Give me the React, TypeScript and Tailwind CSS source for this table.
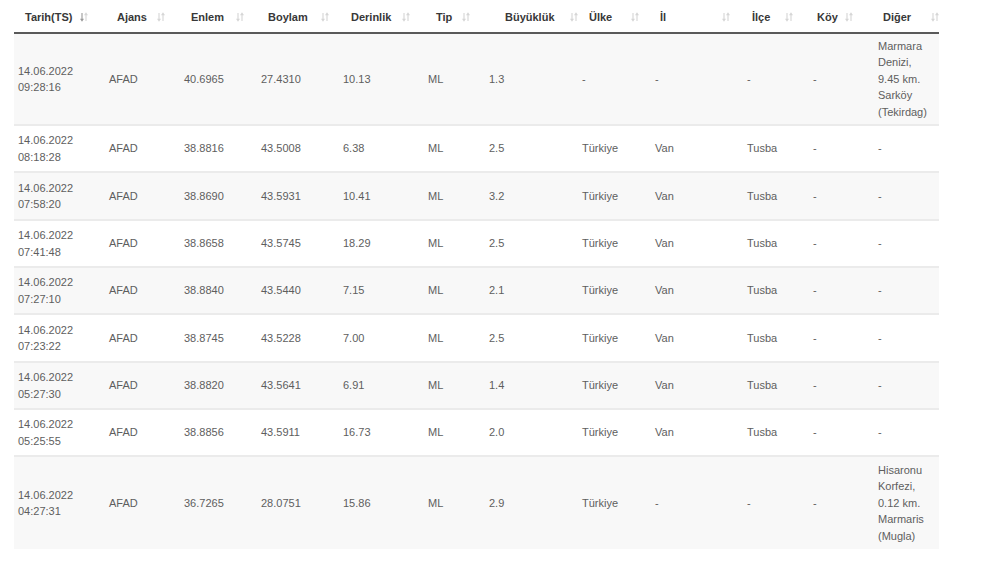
import React from "react";

type Col = { label: string; w: number; hpl: number; gap: number };

const cols: Col[] = [
  { label: "Tarih(TS)", w: 91, hpl: 11, gap: 8 },
  { label: "Ajans", w: 75, hpl: 12, gap: 10 },
  { label: "Enlem", w: 77, hpl: 11, gap: 12 },
  { label: "Boylam", w: 82, hpl: 11, gap: 13 },
  { label: "Derinlik", w: 85, hpl: 12, gap: 11 },
  { label: "Tip", w: 61, hpl: 12, gap: 10 },
  { label: "Büyüklük", w: 93, hpl: 20, gap: 15 },
  { label: "Ülke", w: 73, hpl: 11, gap: 19 },
  { label: "İl", w: 92, hpl: 9, gap: 56 },
  { label: "İlçe", w: 66, hpl: 9, gap: 15 },
  { label: "Köy", w: 65, hpl: 8, gap: 7 },
  { label: "Diğer", w: 65, hpl: 9, gap: 20 },
];

type Row = { d: string; t: string; enlem: string; boylam: string; der: string; mag: string; ulke: string; il: string; ilce: string; koy: string; diger: string[]; h: string };

const rows: Row[] = [
  { d: "14.06.2022", t: "09:28:16", enlem: "40.6965", boylam: "27.4310", der: "10.13", mag: "1.3", ulke: "-", il: "-", ilce: "-", koy: "-", diger: ["Marmara", "Denizi,", "9.45 km.", "Sarköy", "(Tekirdag)"], h: "h-[92px]" },
  { d: "14.06.2022", t: "08:18:28", enlem: "38.8816", boylam: "43.5008", der: "6.38", mag: "2.5", ulke: "Türkiye", il: "Van", ilce: "Tusba", koy: "-", diger: ["-"], h: "h-[47px]" },
  { d: "14.06.2022", t: "07:58:20", enlem: "38.8690", boylam: "43.5931", der: "10.41", mag: "3.2", ulke: "Türkiye", il: "Van", ilce: "Tusba", koy: "-", diger: ["-"], h: "h-[48px]" },
  { d: "14.06.2022", t: "07:41:48", enlem: "38.8658", boylam: "43.5745", der: "18.29", mag: "2.5", ulke: "Türkiye", il: "Van", ilce: "Tusba", koy: "-", diger: ["-"], h: "h-[47px]" },
  { d: "14.06.2022", t: "07:27:10", enlem: "38.8840", boylam: "43.5440", der: "7.15", mag: "2.1", ulke: "Türkiye", il: "Van", ilce: "Tusba", koy: "-", diger: ["-"], h: "h-[47px]" },
  { d: "14.06.2022", t: "07:23:22", enlem: "38.8745", boylam: "43.5228", der: "7.00", mag: "2.5", ulke: "Türkiye", il: "Van", ilce: "Tusba", koy: "-", diger: ["-"], h: "h-[48px]" },
  { d: "14.06.2022", t: "05:27:30", enlem: "38.8820", boylam: "43.5641", der: "6.91", mag: "1.4", ulke: "Türkiye", il: "Van", ilce: "Tusba", koy: "-", diger: ["-"], h: "h-[47px]" },
  { d: "14.06.2022", t: "05:25:55", enlem: "38.8856", boylam: "43.5911", der: "16.73", mag: "2.0", ulke: "Türkiye", il: "Van", ilce: "Tusba", koy: "-", diger: ["-"], h: "h-[47px]" },
  { d: "14.06.2022", t: "04:27:31", enlem: "36.7265", boylam: "28.0751", der: "15.86", mag: "2.9", ulke: "Türkiye", il: "-", ilce: "-", koy: "-", diger: ["Hisaronu", "Korfezi,", "0.12 km.", "Marmaris", "(Mugla)"], h: "h-[93px]" },
];

function SortIcon({ active }: { active?: boolean }) {
  return (
    <svg width="8" height="10" viewBox="0 0 8 10" className="inline-block align-[-1px]" fill="none" strokeWidth="1.1">
      <path d="M2 1v7.5M0.6 6.8 2 8.8 3.4 6.8" stroke={active ? "#9a9a9a" : "#d6d6d6"} />
      <path d="M6 9V1.5M4.6 3.2 6 1.2 7.4 3.2" stroke="#d6d6d6" />
    </svg>
  );
}

export default function App() {
  return (
    <div className="w-[987px] h-[573px] bg-white pl-[14px]" style={{ fontFamily: '"Liberation Sans", Arial, sans-serif' }}>
      <table className="table-fixed border-collapse w-[925px] text-[11px]">
        <colgroup>
          {cols.map((c, i) => (
            <col key={i} style={{ width: c.w }} />
          ))}
        </colgroup>
        <thead>
          <tr className="h-[33px] border-b-2 border-[#5a5a5a]">
            {cols.map((c, i) => (
              <th key={i} className="text-left font-bold text-[#383838] align-middle pt-[3px] whitespace-nowrap" style={{ paddingLeft: c.hpl }}>
                <span>{c.label}</span>
                <span style={{ marginLeft: c.gap }}>
                  <SortIcon active={i === 0} />
                </span>
              </th>
            ))}
          </tr>
        </thead>
        <tbody className="text-[#5e5e5e] leading-[16.5px]">
          {rows.map((r, i) => {
            const bg = i % 2 === 0 ? "bg-[#f8f8f8]" : "bg-white";
            const border = i === rows.length - 1 ? "" : "border-b-2 border-[#ebebeb]";
            const cells = ["AFAD", r.enlem, r.boylam, r.der, "ML", r.mag, r.ulke, r.il, r.ilce, r.koy];
            return (
              <tr key={i} className={`${bg} ${r.h} ${border}`}>
                <td className="pl-[4px] align-middle">
                  <div>{r.d}</div>
                  <div>{r.t}</div>
                </td>
                {cells.map((c, j) => (
                  <td key={j} className="pl-[4px] align-middle whitespace-nowrap">
                    {c}
                  </td>
                ))}
                <td className="pl-[4px] align-middle">
                  {r.diger.map((l, k) => (
                    <div key={k} className="whitespace-nowrap">{l}</div>
                  ))}
                </td>
              </tr>
            );
          })}
        </tbody>
      </table>
    </div>
  );
}
